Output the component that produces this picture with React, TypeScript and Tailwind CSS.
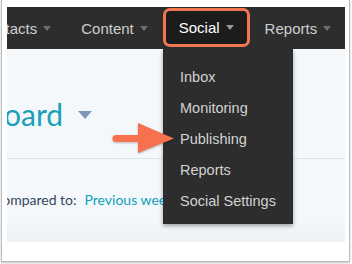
import React from "react";

const Caret = ({ className }: { className: string }) => (
  <span className={`inline-block w-0 h-0 border-l-[4px] border-r-[4px] border-t-[5px] border-l-transparent border-r-transparent ${className}`} />
);

const NavItem = ({ label, active, first }: { label: string; active?: boolean; first?: boolean }) => (
  <div
    className={
      active
        ? "flex items-center h-[39px] mt-[1px] px-[13px] rounded-[7px] border-[3px] border-[#f2764f] bg-[#1c1c1c] text-white shrink-0"
        : `flex items-center h-full px-[15px] text-[#cfcfcf] shrink-0 ${first ? "ml-[-44px]" : ""}`
    }
  >
    <span>{label}</span>
    <Caret className={active ? "ml-[6px] border-t-[#9a9a9a]" : "ml-[6px] border-t-[#6e6e6e]"} />
  </div>
);

const menu = ["Inbox", "Monitoring", "Publishing", "Reports", "Social Settings"];

export default function App() {
  return (
    <div className="w-[352px] h-[264px] bg-white overflow-hidden">
      <div className="ml-[1px] w-[349px] h-[262px] bg-white border-x border-b border-[#bdbdbd] shadow-[0_1px_2px_rgba(0,0,0,0.25)] pt-[7px] pl-[5px] pr-[3px]">
        <div className="relative w-[338px] h-[235px]">
          {/* top nav */}
          <div
            className="flex items-start h-[42px] bg-[#2d2d2d] overflow-hidden text-[15px] leading-none"
            style={{ fontFamily: '"Liberation Sans", Arial, sans-serif' }}
          >
            <NavItem label="Contacts" first />
            <NavItem label="Content" />
            <NavItem label="Social" active />
            <NavItem label="Reports" />
          </div>

          {/* page body */}
          <div
            className="h-[193px] bg-[linear-gradient(to_bottom,#f5f8fa_0%,#f5f8fa_88%,#edf1f5_100%)] overflow-hidden"
            style={{ fontFamily: 'Lato, "Open Sans", sans-serif' }}
          >
            <div className="flex items-center h-[109px] pt-[20px]">
              <span className="ml-[-3px] text-[30px] leading-none text-[#16a0bb]">oard</span>
              <span className="ml-[15px] mt-[2px] w-0 h-0 border-l-[7px] border-r-[7px] border-t-[8px] border-l-transparent border-r-transparent border-t-[#7d98b4]" />
            </div>
            <div className="h-px bg-[#dce2e8]" />
            <div className="flex items-center mt-[34px] text-[14px] leading-none">
              <span className="ml-[-14px] text-[#33475b]">Compared to:</span>
              <span className="ml-[8px] text-[#0f9fbc]">Previous week</span>
            </div>
          </div>

          {/* dropdown */}
          <div
            className="absolute left-[156px] top-[42px] w-[130px] pt-[13px] pb-[7px] bg-[#2d2d2d] shadow-[0_2px_4px_rgba(0,0,0,0.35)]"
            style={{ fontFamily: '"Liberation Sans", Arial, sans-serif' }}
          >
            {menu.map((m) => (
              <div key={m} className="h-[31px] flex items-center pl-[17px] text-[14.5px] text-[#d2d2d2]">
                {m}
              </div>
            ))}
          </div>

          {/* arrow */}
          <svg className="absolute left-[103px] top-[113px]" width="66" height="38" viewBox="0 0 66 38">
            <g style={{ filter: "drop-shadow(0 1px 1px rgba(0,0,0,0.25))" }}>
              <line x1="6" y1="18.5" x2="34" y2="18.5" stroke="#f7714e" strokeWidth="7" strokeLinecap="round" />
              <polygon points="28,3 64,18.5 28,33" fill="#f7714e" />
            </g>
          </svg>
        </div>
      </div>
    </div>
  );
}
